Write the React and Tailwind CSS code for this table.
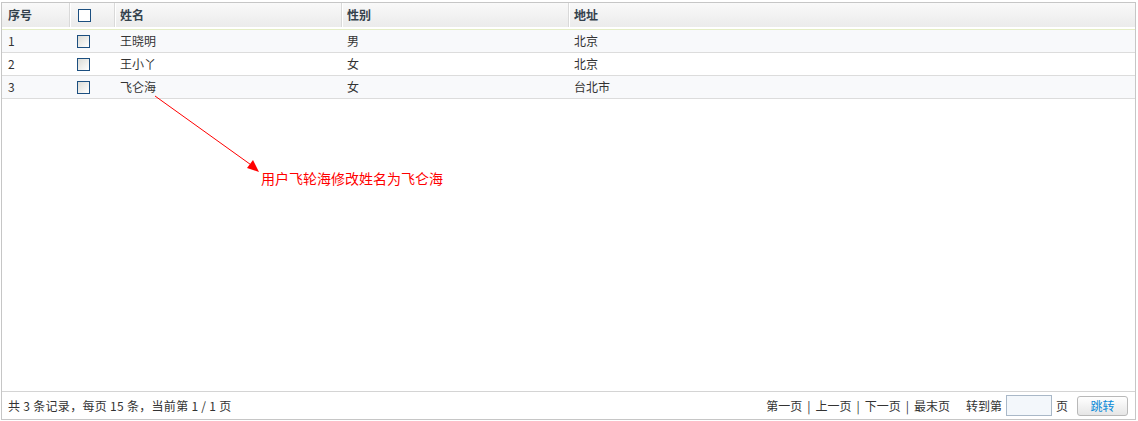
import React from 'react'

const rows = [
    { id: 1, name: '王晓明', sex: '男', addr: '北京' },
    { id: 2, name: '王小丫', sex: '女', addr: '北京' },
    { id: 3, name: '飞仑海', sex: '女', addr: '台北市' },
]

const font = { fontFamily: '"SimSun", "Noto Sans CJK SC", "Liberation Sans", sans-serif' }

const Box = ({ head }) => (
    <span
        className={`block w-[13px] h-[13px] border border-[#1c4f80] ${
            head ? 'bg-white' : 'bg-gradient-to-br from-[#dcdcd6] to-white'
        }`}
    />
)

const App = () => {
    return (
        <div className="w-[1138px] h-[421px] bg-white pl-[1px] pt-[2px] text-[12px] text-[#333]" style={font}>
            <div className="relative w-[1135px] h-[418px] border border-[#c6c6c6] flex flex-col">
                {/* Header */}
                <div className="grid grid-cols-[68px_45px_227px_227px_1fr] h-[26px] bg-gradient-to-b from-[#f9f9f9] to-[#ebebeb] border-b-2 border-b-white font-bold text-[#34414c]">
                    <div className="flex items-center pl-[6px] border-r border-r-[#d9d9d9]">序号</div>
                    <div className="flex items-center pl-[7px] border-l border-l-white border-r border-r-[#d9d9d9]"><Box head /></div>
                    <div className="flex items-center pl-[4px] border-l border-l-white border-r border-r-[#d9d9d9]">姓名</div>
                    <div className="flex items-center pl-[4px] border-l border-l-white border-r border-r-[#d9d9d9]">性别</div>
                    <div className="flex items-center pl-[4px] border-l border-l-white">地址</div>
                </div>
                <div className="h-[1px] bg-[#e4edc4]" />

                {/* Body */}
                <div className="flex-1">
                    {rows.map((r, i) => (
                        <div
                            key={r.id}
                            className={`grid grid-cols-[68px_45px_227px_227px_1fr] h-[23px] border-b border-b-[#dcdcdc] ${
                                i % 2 === 0 ? 'bg-[#f8f9fb]' : 'bg-white'
                            }`}
                        >
                            <div className="flex items-center pl-[6px]">{r.id}</div>
                            <div className="flex items-center pl-[7px]"><Box /></div>
                            <div className="flex items-center pl-[5px]">{r.name}</div>
                            <div className="flex items-center pl-[5px]">{r.sex}</div>
                            <div className="flex items-center pl-[5px]">{r.addr}</div>
                        </div>
                    ))}
                </div>

                {/* Footer */}
                <div className="h-[28px] border-t border-t-[#d4d4d4] flex items-center justify-between pl-[6px] pr-[7px]">
                    <span className="tracking-[0.3px]">共 3 条记录，每页 15 条，当前第 1 / 1 页</span>
                    <div className="flex items-center">
                        <span>第一页</span>
                        <span className="mx-[5px]">|</span>
                        <span>上一页</span>
                        <span className="mx-[5px]">|</span>
                        <span>下一页</span>
                        <span className="mx-[5px]">|</span>
                        <span>最末页</span>
                        <span className="ml-[16px]">转到第</span>
                        <input className="ml-[4px] w-[46px] h-[21px] border border-[#a9b8c8] bg-[#f3f7fb] outline-none" />
                        <span className="ml-[4px]">页</span>
                        <button className="ml-[9px] w-[51px] h-[20px] rounded-[3px] border border-[#b9b9b9] bg-gradient-to-b from-white to-[#e6e6e6] text-[#0a8ad8]">
                            跳转
                        </button>
                    </div>
                </div>

                {/* Annotation overlay */}
                <svg className="absolute left-0 top-0 pointer-events-none" width="1135" height="418">
                    <line x1="153" y1="93" x2="252" y2="164" stroke="#ff0000" strokeWidth="1" />
                    <polygon points="257,169 245,165 251,157" fill="#ff0000" />
                </svg>
                <span className="absolute left-[259px] top-[165px] text-[14px] text-[#ff0000] whitespace-nowrap">
                    用户飞轮海修改姓名为飞仑海
                </span>
            </div>
        </div>
    )
}

export default App
